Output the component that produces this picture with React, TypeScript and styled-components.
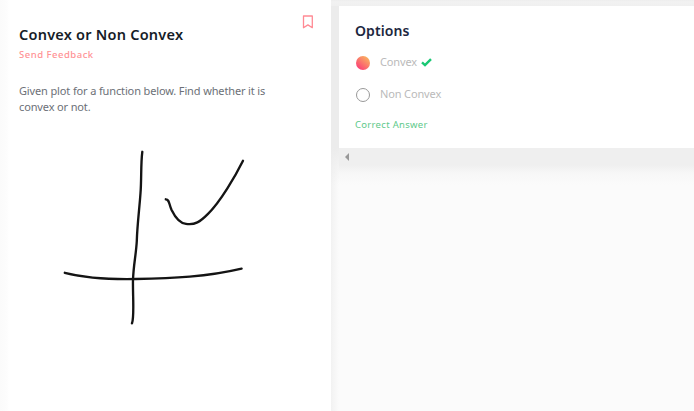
import React from "react";
import styled, { createGlobalStyle } from "styled-components";

const GlobalStyle = createGlobalStyle`
  * { box-sizing: border-box; }
  html, body { margin: 0; padding: 0; overflow: hidden; }
  body { font-family: "Noto Sans", sans-serif; background: #fbfbfb; }
  h1, h2, p { margin: 0; }
`;

const Page = styled.main`
  display: flex;
  width: 694px;
  height: 411px;
  overflow: hidden;
  background: #fbfbfb;
`;

const ProblemPanel = styled.section`
  flex: 0 0 331px;
  height: 411px;
  padding: 25px 18px 0 19px;
  background: linear-gradient(90deg, #fbfbfb 0, #fdfdfd 7px, #fff 9px);
`;

const TitleRow = styled.header`
  display: flex;
  justify-content: space-between;
  height: 19px;
`;

const Title = styled.h1`
  color: #161c27;
  font-size: 14.5px;
  font-weight: 600;
  line-height: 18px;
  letter-spacing: 0.23px;
  white-space: nowrap;
`;

const BookmarkButton = styled.button`
  display: block;
  width: 11px;
  height: 14px;
  margin-top: -10px;
  padding: 0;
  border: 0;
  background: none;
  svg { display: block; }
`;

const FeedbackLink = styled.p`
  margin-top: 4px;
  color: #ff9295;
  font-size: 9.5px;
  font-weight: 500;
  line-height: 13px;
  letter-spacing: 0.5px;
`;

const Description = styled.p`
  margin-top: 22px;
  color: #6c7077;
  font-size: 11px;
  line-height: 16px;
  letter-spacing: -0.135px;
  white-space: nowrap;
`;

const Plot = styled.svg`
  display: block;
  margin: 25px 0 0 31px;
`;

const AnswerArea = styled.section`
  display: flex;
  flex: 1;
  flex-direction: column;
  min-width: 0;
  height: 411px;
  padding: 6px 0 0 8px;
  background:
    linear-gradient(180deg, #ededed 0, #f2f2f2 2px, #f0f0f0 6px, transparent 6px),
    linear-gradient(180deg, #ececec 0, #ececec 148px, rgba(236, 236, 236, 0) 185px) 0 0 / 8px 100% no-repeat,
    linear-gradient(90deg, #f2f2f2 0, #fbfbfb 8px);
`;

const OptionsCard = styled.div`
  height: 142px;
  padding: 16px 16px 0;
  background: #fff;
`;

const OptionsTitle = styled.h2`
  color: #1c2740;
  font-size: 14px;
  font-weight: 600;
  line-height: 18px;
  letter-spacing: 0.1px;
`;

const OptionRow = styled.label`
  display: flex;
  align-items: center;
  height: 16px;
  margin-top: 14px;
  & + & { margin-top: 16px; }
`;

const Radio = styled.span<{ $selected?: boolean }>`
  width: 14px;
  height: 14px;
  margin: 1px 10px 0 1px;
  border: ${p => (p.$selected ? "0" : "1px solid #999")};
  border-radius: 50%;
  background: ${p => (p.$selected ? "linear-gradient(40deg, #fb4076 12%, #f9b260 88%)" : "#fff")};
`;

const OptionText = styled.span`
  color: #bababa;
  font-size: 11px;
  line-height: 16px;
  letter-spacing: -0.14px;
  white-space: nowrap;
`;

const Check = styled.svg`
  display: block;
  margin: 0 0 0 4px;
`;

const Result = styled.p`
  margin-top: 16px;
  color: #60c98b;
  font-size: 9.5px;
  line-height: 13px;
  letter-spacing: 0.3px;
`;

const ScrollTrack = styled.div`
  display: flex;
  align-items: center;
  height: 17px;
  padding-left: 6px;
  background: #efefef;
`;

const TrackShadow = styled.div`
  height: 20px;
  background: linear-gradient(180deg, #efefef, #f7f7f7 40%, #fbfbfb);
`;

export default function App() {
  return (
    <>
      <GlobalStyle />
      <Page>
        <ProblemPanel>
          <TitleRow>
            <Title>Convex or Non Convex</Title>
            <BookmarkButton aria-label="Bookmark">
              <svg width="11" height="14" viewBox="0 0 11 14" fill="none" stroke="#ff8a94" strokeWidth="1.3">
                <path d="M1.5 1h8.8v11.7L5.9 9.9 1.5 12.7Z" strokeLinejoin="round" />
              </svg>
            </BookmarkButton>
          </TitleRow>
          <FeedbackLink>Send Feedback</FeedbackLink>
          <Description>
            Given plot for a function below. Find whether it is<br />convex or not.
          </Description>
          <Plot width="210" height="195" viewBox="50 140 210 195" fill="none" stroke="#141414" strokeWidth="2.35" strokeLinecap="round" strokeLinejoin="round">
            <path d="M142.3 151.8C140.7 164 141.6 180 140.5 193C139.5 208 137.2 225 136.8 241C136 255 133.5 265 133 280C132.6 294 134.6 317 132 323.3" />
            <path d="M64.8 272.8C82 277.2 111 279.5 136 279C173 278.4 207 276.8 241.6 268.6" />
            <path d="M165.8 199.3C169.5 199.5 168.6 203.3 171.6 210C175.5 218 179.5 223.2 186 223.9C195 225.3 200 221.8 208 213.8C220 202.5 236 175 243 160.8" />
          </Plot>
        </ProblemPanel>
        <AnswerArea>
          <OptionsCard>
            <OptionsTitle>Options</OptionsTitle>
            <OptionRow>
              <Radio $selected />
              <OptionText>Convex</OptionText>
              <Check width="11" height="9" viewBox="0 0 11 9" fill="none" stroke="#19c874" strokeWidth="2.4">
                <path d="m1 4.4 3 2.8 6-6" />
              </Check>
            </OptionRow>
            <OptionRow>
              <Radio />
              <OptionText>Non Convex</OptionText>
            </OptionRow>
            <Result>Correct Answer</Result>
          </OptionsCard>
          <ScrollTrack>
            <svg width="4" height="8" viewBox="0 0 4 8"><path d="M4 0v8L0 4Z" fill="#999" /></svg>
          </ScrollTrack>
          <TrackShadow />
        </AnswerArea>
      </Page>
    </>
  );
}
